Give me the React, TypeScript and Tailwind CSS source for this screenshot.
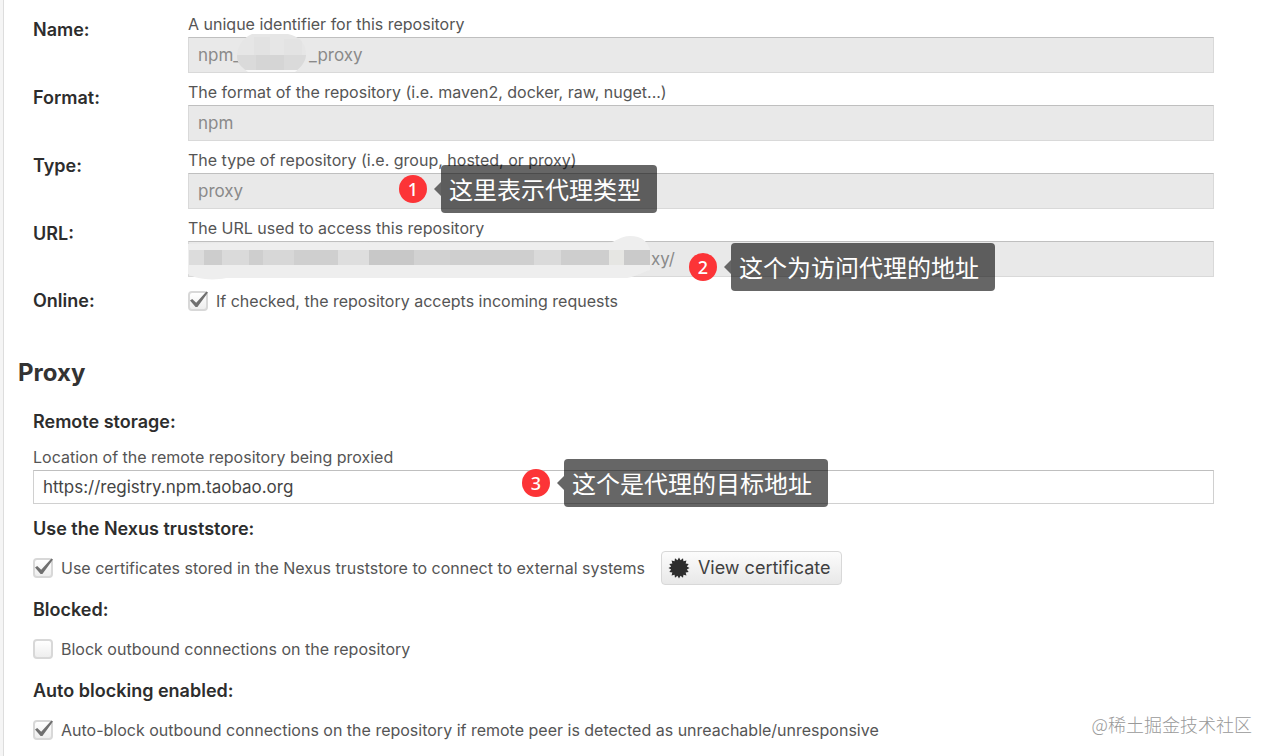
import React from 'react'

type AnnotationProps = {
  step: number
  text: string
  className: string
}

function Annotation({ step, text, className }: AnnotationProps) {
  return (
    <div className={`absolute z-10 flex items-center ${className}`}>
      <span className="flex size-7 items-center justify-center rounded-full bg-[#fc3437] font-['Noto_Sans'] text-lg font-medium text-white">
        {step}
      </span>
      <svg className="ml-1.5 h-3.5 w-2" viewBox="0 0 8 14" fill="#666" aria-hidden="true">
        <path d="M8 0v14L1 7z" />
      </svg>
      <span className="rounded-sm bg-black/60 py-2 pr-4 pl-2 font-['Noto_Sans_CJK_SC',sans-serif] text-2xl whitespace-nowrap text-white">
        {text}
      </span>
    </div>
  )
}

type FieldProps = {
  id: string
  label: string
  help: string
  value: string
  inputClassName?: string
  children?: React.ReactNode
}

function ReadOnlyField({ id, label, help, value, inputClassName = 'px-[9px]', children }: FieldProps) {
  return (
    <div className="flex">
      <label htmlFor={id} className="w-[155px] shrink-0 pt-[5px] text-lg leading-6 font-semibold text-[#2d2d2d]">
        {label}
      </label>
      <div className="min-w-0 flex-1">
        <p id={`${id}-help`} className="pb-0.5 leading-[22px]">
          {help}
        </p>
        <div className="relative">
          <input
            id={id}
            aria-describedby={`${id}-help`}
            readOnly
            value={value}
            className={`block h-9 w-full border border-[#d9d9d9] border-t-[#bfbfbf] bg-[#e9e9e9] text-[17px] text-[#8a8a8a] outline-none ${inputClassName}`}
          />
          {children}
        </div>
      </div>
    </div>
  )
}

function Checkbox({ id, label, defaultChecked }: { id: string; label: string; defaultChecked?: boolean }) {
  return (
    <label htmlFor={id} className="flex items-center gap-2">
      <span className="relative block size-5">
        <input
          id={id}
          type="checkbox"
          defaultChecked={defaultChecked}
          className="peer block size-5 appearance-none rounded-sm border-2 border-[#d8d8d8] bg-linear-to-b from-white to-[#eee]"
        />
        <svg
          className="pointer-events-none absolute inset-0 hidden size-5 peer-checked:block"
          viewBox="0 0 20 20"
          fill="#707070"
          aria-hidden="true"
        >
          <path d="M2 9.5 4.2 8l4 3.8L18.4.4 20 1.5 9.4 16H7.6z" />
        </svg>
      </span>
      {label}
    </label>
  )
}

function IconCertificate() {
  const points = Array.from({ length: 32 }, (_, i) => {
    const radius = i % 2 ? 8 : 10.5
    const angle = (i * Math.PI) / 16
    return `${11 + radius * Math.sin(angle)},${11 - radius * Math.cos(angle)}`
  }).join(' ')

  return (
    <svg className="size-[22px]" viewBox="0 0 22 22" fill="#2d2d2d" aria-hidden="true">
      <polygon points={points} />
    </svg>
  )
}

function NameMask() {
  return (
    <svg className="absolute -top-1 left-12 h-[42px] w-[72px]" viewBox="0 0 72 42" aria-hidden="true">
      <defs>
        <clipPath id="name-mask">
          <path d="M16 1h36c11 2 19 10 18 22-1 7-6 12-11 16H12C7 35 1 31 1 24 1 14 6 5 16 1z" />
        </clipPath>
      </defs>
      <g clipPath="url(#name-mask)">
        <path fill="#e6e6e6" d="M0 0h72v22H0z" />
        <path fill="#e2e2e2" d="M18 4h16v18H18z" />
        <path fill="#e3e3e3" d="M48 6h18v16H48z" />
        <path fill="#dadada" d="M0 22h72v15H0z" />
        <path fill="#d5d5d5" d="M20 22h28v15H20z" />
        <path fill="#f8f8f8" d="M0 37h72v5H0z" />
      </g>
    </svg>
  )
}

const urlBlocks = [
  [1, 15, '#dcdcdc'],
  [16, 18, '#cdcdcd'],
  [34, 27, '#dadada'],
  [61, 14, '#cecece'],
  [75, 31, '#d7d7d7'],
  [106, 44, '#cfcfcf'],
  [150, 31, '#dedede'],
  [181, 45, '#c8c8c8'],
  [226, 36, '#d2d2d2'],
  [262, 84, '#cfcfcf'],
  [346, 27, '#dadada'],
  [373, 48, '#cecece'],
  [421, 15, '#e6e6e3'],
  [436, 26, '#cacaca'],
] as const

function UrlMask() {
  return (
    <svg className="absolute -top-1.5 left-0 h-[46px] w-[464px]" viewBox="0 0 464 46" aria-hidden="true">
      <path
        fill="#eee"
        d="M0 9C60 6 160 8 250 8h170c8-1 12-7 22-7 12 0 18 6 20 14v20c-7 2-13 6-23 8H38c-14 3-30 1-38-4z"
      />
      {urlBlocks.map(([x, width, fill]) => (
        <rect key={x} x={x} y="15" width={width} height="15" fill={fill} />
      ))}
    </svg>
  )
}

export default function App() {
  return (
    <div className="flex min-h-screen bg-[#f5f5f5] font-[Inter,sans-serif] text-base text-[#555]">
      <main className="relative ml-[3px] flex-1 border-l border-[#ddd] bg-white pt-[13px] pr-[58px] pb-2 pl-3.5">
        <section className="flex flex-col gap-2 pl-[15px]">
          <ReadOnlyField
            id="name"
            label="Name:"
            help="A unique identifier for this repository"
            value={'npm_\u2003\u2003\u2003\u2003_proxy'}
          >
            <NameMask />
          </ReadOnlyField>
          <ReadOnlyField
            id="format"
            label="Format:"
            help="The format of the repository (i.e. maven2, docker, raw, nuget...)"
            value="npm"
          />
          <ReadOnlyField
            id="type"
            label="Type:"
            help="The type of repository (i.e. group, hosted, or proxy)"
            value="proxy"
          >
            <Annotation step={1} text="这里表示代理类型" className="-top-2 left-[211px]" />
          </ReadOnlyField>
          <ReadOnlyField
            id="url"
            label="URL:"
            help="The URL used to access this repository"
            value="xy/"
            inputClassName="pl-[462px]"
          >
            <UrlMask />
            <Annotation step={2} text="这个为访问代理的地址" className="top-0.5 left-[501px]" />
          </ReadOnlyField>
          <div className="flex h-8 items-center">
            <span className="w-[155px] shrink-0 text-lg font-semibold text-[#2d2d2d]">Online:</span>
            <Checkbox id="online" label="If checked, the repository accepts incoming requests" defaultChecked />
          </div>
        </section>

        <h2 className="mt-10 text-2xl leading-8 font-bold text-[#333]">Proxy</h2>

        <section className="mt-[21px] flex flex-col gap-[13px] pl-[15px]">
          <div>
            <label htmlFor="remote" className="block text-lg leading-6 font-semibold text-[#2d2d2d]">
              Remote storage:
            </label>
            <p id="remote-help" className="mt-3 pb-0.5 leading-[22px]">
              Location of the remote repository being proxied
            </p>
            <div className="relative">
              <input
                id="remote"
                aria-describedby="remote-help"
                defaultValue="https://registry.npm.taobao.org"
                className="block h-[34px] w-full border border-[#d0d0d0] border-t-[#bfbfbf] bg-white px-[9px] text-[17px] text-[#444] outline-none"
              />
              <Annotation step={3} text="这个是代理的目标地址" className="-top-[11px] left-[489px]" />
            </div>
          </div>
          <div>
            <h3 className="text-lg leading-6 font-semibold text-[#2d2d2d]">Use the Nexus truststore:</h3>
            <div className="mt-2.5 flex h-[34px] items-center gap-4">
              <Checkbox
                id="truststore"
                label="Use certificates stored in the Nexus truststore to connect to external systems"
                defaultChecked
              />
              <button
                type="button"
                className="flex h-full items-center gap-2 rounded-sm border border-[#d8d8d8] bg-linear-to-b from-[#fcfcfc] to-[#e8e8e8] px-1.5 pr-2.5 text-lg text-[#404040]"
              >
                <IconCertificate />
                View certificate
              </button>
            </div>
          </div>
          <div>
            <h3 className="text-lg leading-6 font-semibold text-[#2d2d2d]">Blocked:</h3>
            <div className="mt-2.5 flex h-[34px] items-center">
              <Checkbox id="blocked" label="Block outbound connections on the repository" />
            </div>
          </div>
          <div>
            <h3 className="text-lg leading-6 font-semibold text-[#2d2d2d]">Auto blocking enabled:</h3>
            <div className="mt-2.5 flex h-[34px] items-center">
              <Checkbox
                id="auto-block"
                label="Auto-block outbound connections on the repository if remote peer is detected as unreachable/unresponsive"
                defaultChecked
              />
            </div>
          </div>
        </section>

        <p className="absolute right-5 bottom-[18px] font-['Noto_Sans_CJK_SC',sans-serif] text-lg font-light text-[#999]">
          @稀土掘金技术社区
        </p>
      </main>
    </div>
  )
}
